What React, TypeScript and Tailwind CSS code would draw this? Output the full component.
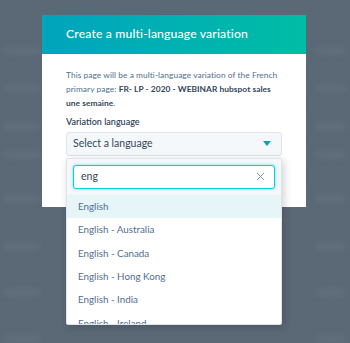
import { X } from "lucide-react";

const languages = [
  "English",
  "English - Australia",
  "English - Canada",
  "English - Hong Kong",
  "English - India",
  "English - Ireland",
];

// faint rows of the page behind the overlay
const ghostRows = [48, 86, 124, 152, 196, 244, 290, 336];

function Backdrop() {
  return (
    <div className="absolute inset-0 blur-[3px]">
      {ghostRows.map((y) => (
        <div key={y} className="absolute left-0 right-0" style={{ top: y }}>
          <div className="flex justify-between px-1">
            <div className="h-[5px] w-[36px] rounded bg-[#65727f]" />
            <div className="h-[5px] w-[30px] rounded bg-[#65727f]" />
          </div>
        </div>
      ))}
    </div>
  );
}

export default function App() {
  return (
    <div
      className="relative w-[350px] h-[343px] overflow-hidden bg-[#5b6876]"
      style={{ fontFamily: "Lato, 'Open Sans', sans-serif" }}
    >
      <Backdrop />

      <div className="absolute left-[42px] top-[15px] w-[264px] h-[192px] bg-white">
        <div className="h-[39px] flex items-center px-6 bg-gradient-to-r from-[#00a4bd] to-[#00bda5]">
          <span className="text-white text-[12.2px] font-medium tracking-[0.15px]">
            Create a multi-language variation
          </span>
        </div>

        <div className="px-6 pt-[14px]">
          <p className="text-[8.4px] leading-[14px] text-[#516f90] tracking-[0.05px]">
            This page will be a multi-language variation of the French
            primary page:{" "}
            <span className="font-bold text-[#33475b]">
              FR- LP - 2020 - WEBINAR hubspot sales une semaine
            </span>
            .
          </p>

          <div className="mt-[5px] text-[9px] font-semibold text-[#33475b]">
            Variation language
          </div>

          <div className="relative mt-[3px]">
            <div className="h-[24px] flex items-center justify-between pl-[6px] pr-[10px] rounded-[3px] border border-[#dfe3eb] bg-[#f5f8fa]">
              <span className="text-[10.5px] text-[#33475b]">
                Select a language
              </span>
              <svg width="8" height="5" viewBox="0 0 8 5">
                <path d="M0 0h8L4 5z" fill="#00a4bd" />
              </svg>
            </div>

            <div className="absolute left-0 right-0 top-[26px] h-[167px] overflow-hidden rounded-[2px] border border-[#dfe3eb] bg-white shadow-[2px_2px_8px_rgba(0,0,0,0.18)]">
              <div className="bg-[#f5f8fa] px-[6px] pt-[6px] pb-[6px]">
                <div className="h-[24px] flex items-center justify-between pl-[7px] pr-[7px] rounded-[3px] border-[1.5px] border-[#00d0e4] bg-white shadow-[0_0_3px_rgba(0,208,228,0.6)]">
                  <span className="text-[10.5px] text-[#33475b]">eng</span>
                  <X className="w-[13px] h-[13px] text-[#7c98b6]" strokeWidth={1.8} />
                </div>
              </div>
              {languages.map((lang, i) => (
                <div
                  key={lang}
                  className={`h-[23.4px] flex items-center px-[11px] text-[9.8px] text-[#516f90] ${
                    i === 0 ? "bg-[#e5f5f8]" : ""
                  }`}
                >
                  {lang}
                </div>
              ))}
            </div>
          </div>
        </div>
      </div>
    </div>
  );
}
